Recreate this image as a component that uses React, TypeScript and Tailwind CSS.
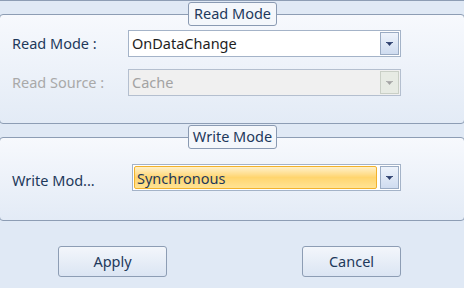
import React from "react";

// Pequena seta do combo (triângulo)
const Arrow = ({ disabled }: { disabled?: boolean }) => (
  <svg width="7" height="4" viewBox="0 0 7 4">
    <rect x="0" y="0" width="7" height="1" fill={disabled ? "#b0b0b0" : "#3b4d7a"} />
    <path d="M1 1h5l-2.5 3z" fill={disabled ? "#a3a3a3" : "#2c3e6b"} />
  </svg>
);

// Combo no estilo Office 2010
const Combo = ({
  value,
  disabled,
  focused,
}: {
  value: string;
  disabled?: boolean;
  focused?: boolean;
}) => (
  <div
    className={`flex h-[27px] items-stretch border p-px ${
      disabled ? "border-[#b4bfcf] bg-[#f0f0f0]" : "border-[#a4b3c8] bg-white"
    }`}
  >
    <div
      className={`flex flex-1 items-center px-[2px] text-[14.5px] leading-none ${
        disabled
          ? "text-[#a3a3a3]"
          : focused
          ? "rounded-[2px] border border-[#f2b22c] bg-gradient-to-b from-[#fff0c8] via-[#ffd56e] to-[#ffe394] text-[#1e395b]"
          : "text-[#1e1e1e]"
      }`}
    >
      {value}
    </div>
    <div
      className={`ml-[3px] flex w-[19px] items-center justify-center border ${
        disabled
          ? "border-[#c9cfc6] bg-[#e7ebe4]"
          : "border-[#9aabc3] bg-gradient-to-b from-[#eef3fb] to-[#cfdcf0]"
      }`}
    >
      <Arrow disabled={disabled} />
    </div>
  </div>
);

// Caixa de grupo com título em aba sobre a borda
const Group = ({
  title,
  className,
  children,
}: {
  title: string;
  className: string;
  children: React.ReactNode;
}) => (
  <div
    className={`relative -mx-px rounded-[4px] border border-[#8d9db4] bg-gradient-to-b from-[#f7f9fd] to-[#e3ebf6] ${className}`}
  >
    <div className="absolute left-[188px] top-[-13px] flex h-[24px] w-[89px] items-center justify-center rounded-[3px] border border-[#8a9ab2] bg-[#f4f7fb] text-[14.5px] text-[#1e395b]">
      {title}
    </div>
    {children}
  </div>
);

const App: React.FC = () => {
  return (
    <div
      className="flex h-[288px] w-[464px] flex-col overflow-hidden border-t border-[#8d9db4] bg-[#e0e9f5]"
      style={{ fontFamily: '"Noto Sans", "Open Sans", sans-serif' }}
    >
      <Group title="Read Mode" className="mt-[13px] h-[110px] px-[12px] pt-[15px]">
        <div className="flex items-center">
          <span className="w-[116px] text-[14.5px] text-[#1e395b]">Read Mode :</span>
          <div className="w-[273px]">
            <Combo value="OnDataChange" />
          </div>
        </div>
        <div className="mt-[12px] flex items-center">
          <span className="w-[116px] text-[14.5px] text-[#a9a9a9]">Read Source :</span>
          <div className="w-[273px]">
            <Combo value="Cache" disabled />
          </div>
        </div>
      </Group>

      <Group title="Write Mode" className="mt-[13px] h-[84px] px-[12px] pt-[26px]">
        <div className="flex items-center">
          <span className="mt-[6px] w-[120px] text-[14.5px] text-[#1e395b]">Write Mod...</span>
          <div className="w-[269px]">
            <Combo value="Synchronous" focused />
          </div>
        </div>
      </Group>

      <div className="mt-[25px] flex">
        <button className="ml-[58px] h-[31px] w-[109px] rounded-[3px] border border-[#8d9db4] bg-gradient-to-b from-[#f3f6fb] to-[#dbe5f3] text-[14.5px] text-[#1e395b]">
          Apply
        </button>
        <button className="ml-[135px] h-[31px] w-[99px] rounded-[3px] border border-[#8d9db4] bg-gradient-to-b from-[#f3f6fb] to-[#dbe5f3] text-[14.5px] text-[#1e395b]">
          Cancel
        </button>
      </div>
    </div>
  );
};

export default App;
